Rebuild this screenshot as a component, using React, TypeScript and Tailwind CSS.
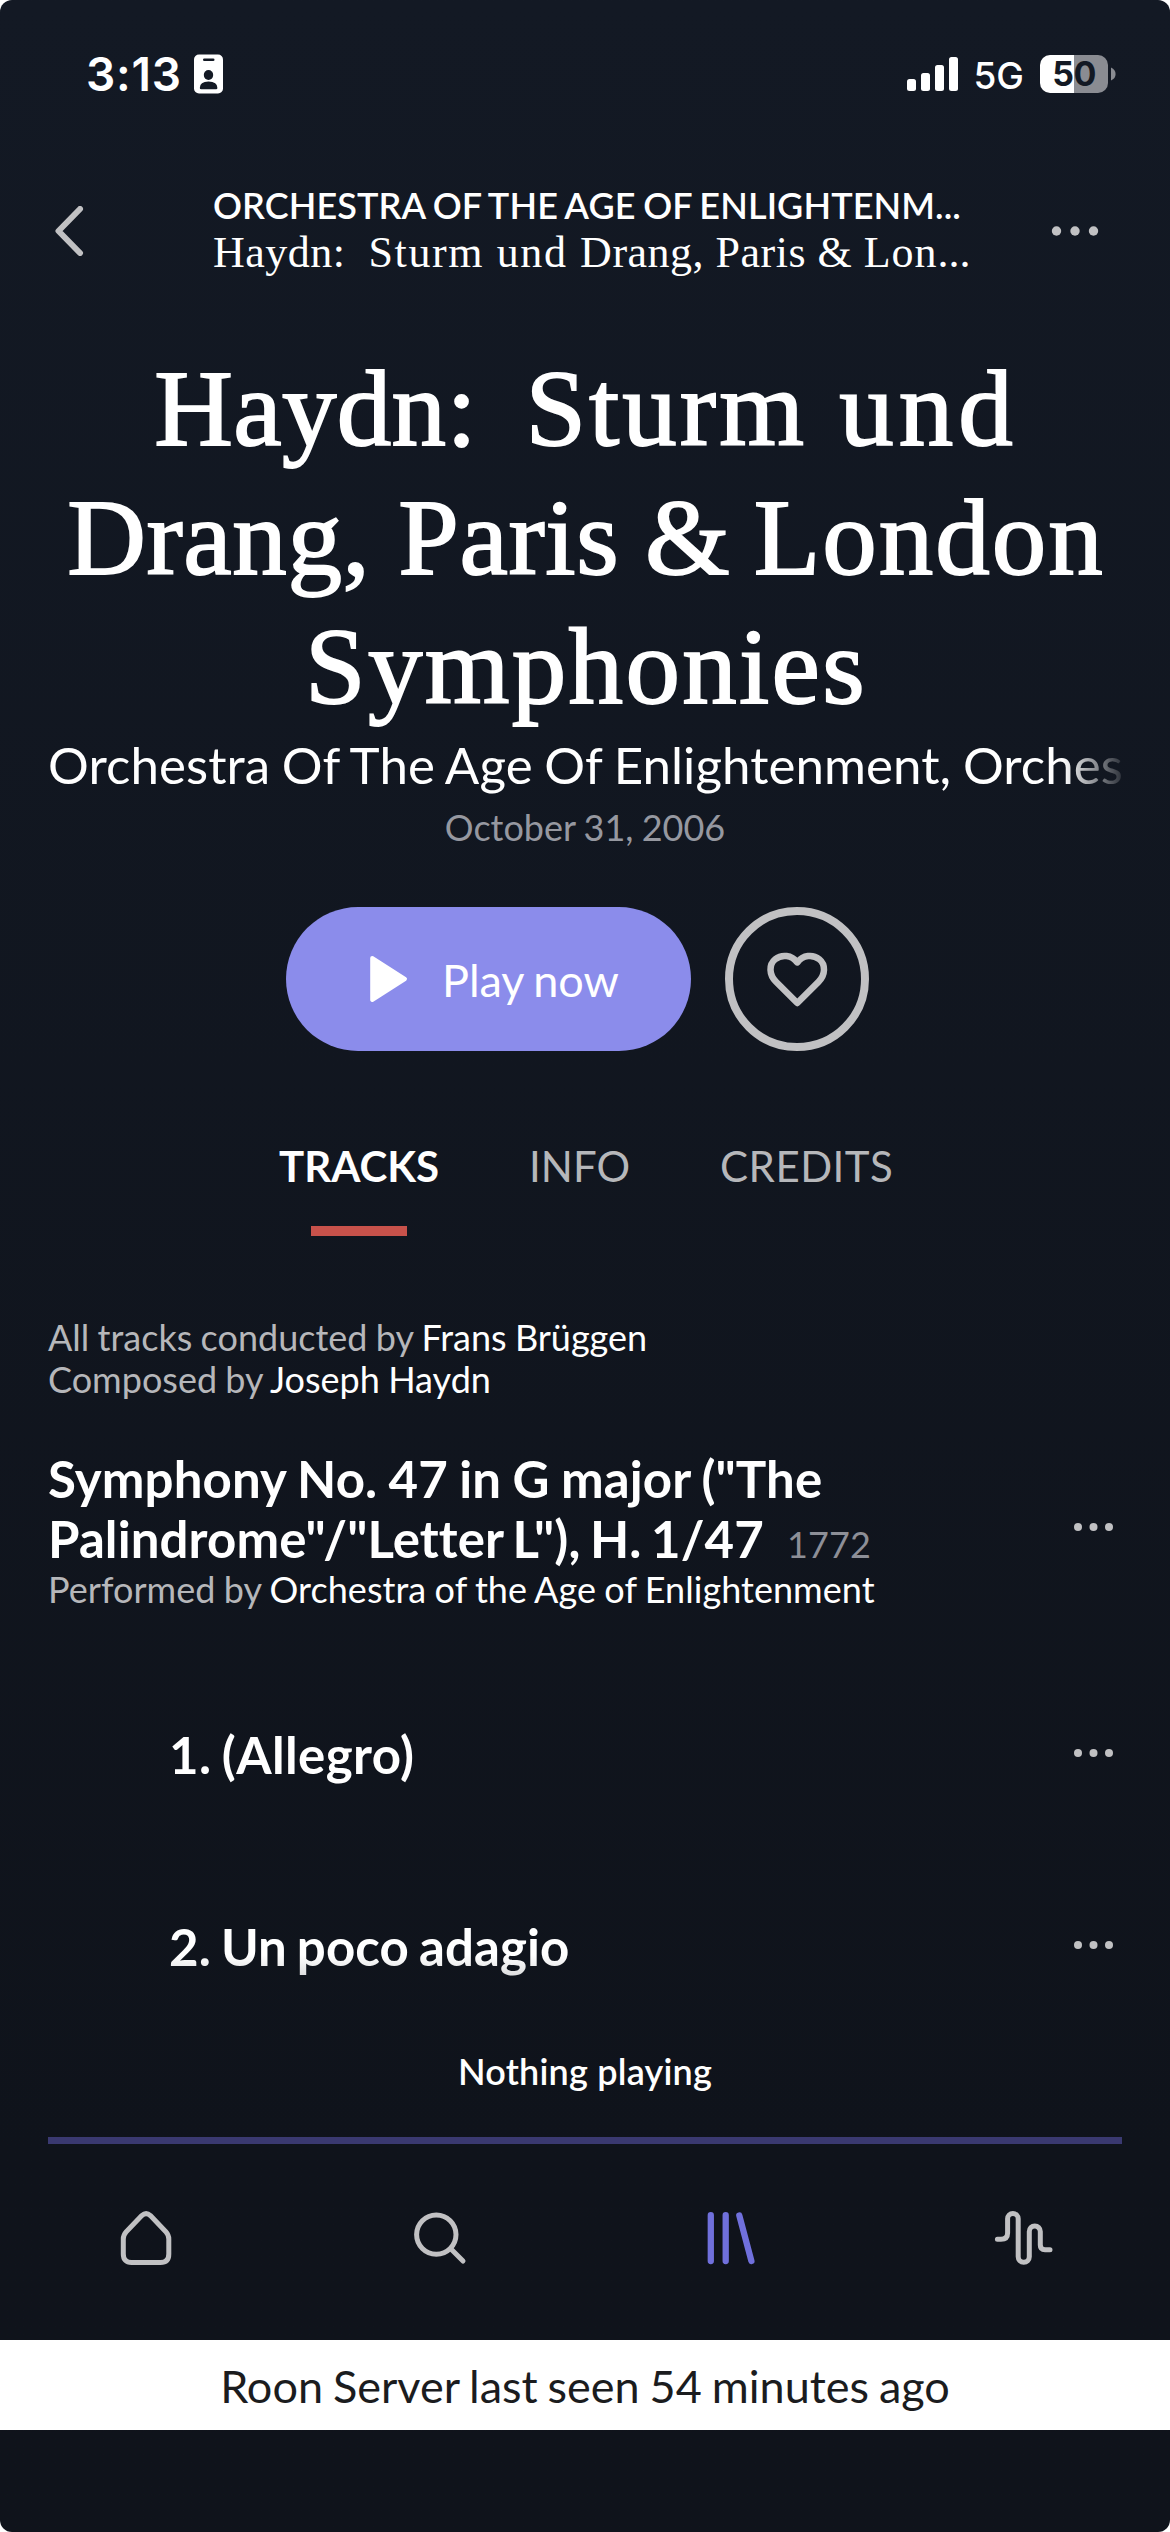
import React, { useState } from "react";

const titleLines = [
  [
    { text: "Haydn:", spacing: "tracking-[0.3px]" },
    { text: "  ", spacing: "tracking-[-3px]" },
    { text: "Sturm", spacing: "tracking-[3px]" },
    { text: " ", spacing: "tracking-[5px]" },
    { text: "und", spacing: "tracking-[5px]" },
  ],
  [
    { text: "Drang, Paris", spacing: "tracking-[0.6px]" },
    { text: " & ", spacing: "tracking-[-1.6px]" },
    { text: "London", spacing: "tracking-[2px]" },
  ],
  [{ text: "Symphonies", spacing: "tracking-[2.3px]" }],
];

const tracks = [
  { title: "1. (Allegro)", spacing: "tracking-[0.4px]" },
  { title: "2. Un poco adagio", spacing: "tracking-[0.1px]" },
];

const tabs = [
  { name: "TRACKS", spacing: "" },
  { name: "INFO", spacing: "" },
  { name: "CREDITS", spacing: "tracking-[0.5px]" },
];

const HomeIcon = () => (
  <svg width="60" height="60" viewBox="0 0 60 60" fill="none" stroke="currentColor" strokeWidth="5" strokeLinejoin="round">
    <path d="M25.8 7.6 Q30.1 3.6 34.4 7.6 L49.6 23.4 Q52.8 27 52.8 31 V46 Q52.8 54.5 44.5 54.5 H15.5 Q7.3 54.5 7.3 46 V31 Q7.3 27 10.5 23.4 Z" />
  </svg>
);

const SearchIcon = () => (
  <svg width="60" height="60" viewBox="0 0 60 60" fill="none" stroke="currentColor" strokeWidth="5" strokeLinecap="round">
    <circle cx="27.3" cy="26.6" r="19.7" />
    <path d="M42 41 L54 53" />
  </svg>
);

const LibraryIcon = () => (
  <svg width="60" height="60" viewBox="0 0 60 60" fill="none" stroke="currentColor" strokeWidth="6.3" strokeLinecap="round">
    <path d="M9.8 7.2 V53 M24.7 7.2 V53 M38.3 7.5 L50.4 53" />
  </svg>
);

const WaveIcon = () => (
  <svg width="60" height="60" viewBox="0 0 60 60" fill="none" stroke="currentColor" strokeWidth="5" strokeLinecap="round">
    <path d="M3.4 31.3 H7 Q13.6 31.3 13.6 25 V10.8 A5.3 5.3 0 0 1 24.2 10.8 V48.8 A5.5 5.5 0 0 0 35.3 48.8 V23.5 A5.5 5.5 0 0 1 46.3 23.5 V37 Q46.3 41.7 51 41.7 H56" />
  </svg>
);

const navItems = [
  { name: "Home", icon: HomeIcon },
  { name: "Search", icon: SearchIcon },
  { name: "Library", icon: LibraryIcon },
  { name: "Audio", icon: WaveIcon },
];

const StatusBar = () => (
  <div className="flex h-[148px] shrink-0 items-center pl-[86px] pr-[54px] font-['Inter',sans-serif]">
    <span className="text-[46px] font-semibold leading-[56px] tracking-[0.8px]">3:13</span>
    <svg className="ml-[12px]" width="29" height="40" viewBox="0 0 29 40">
      <rect x="0" y="0.5" width="29" height="39" rx="5" fill="#fff" />
      <rect x="9" y="4.5" width="11.5" height="2.6" rx="1.3" fill="#131924" />
      <ellipse cx="14.5" cy="21" rx="4.7" ry="5" fill="#131924" />
      <path d="M5.8 34 Q5.8 27.5 14.5 27.5 Q23.4 27.5 23.4 34 Q23.4 35.3 22 35.3 H7.2 Q5.8 35.3 5.8 34 Z" fill="#131924" />
    </svg>

    <svg className="ml-auto" width="51" height="34" viewBox="0 0 51 34" fill="#fff">
      <rect x="0" y="22" width="9" height="12" rx="2.5" />
      <rect x="14" y="16" width="9" height="18" rx="2.5" />
      <rect x="28" y="8" width="9" height="26" rx="2.5" />
      <rect x="42" y="0" width="9" height="34" rx="2.5" />
    </svg>
    <span className="ml-[15px] pt-1 text-[37px] font-medium leading-[44px]">5G</span>
    <div className="ml-[16px] flex h-[38px] w-[68px] items-center justify-center rounded-[10px] bg-linear-to-r from-white from-50% to-[#8a8c92] to-50%">
      <span className="text-[34px] font-bold leading-[38px] tracking-[-0.5px] text-[#131924]">50</span>
    </div>
    <svg className="ml-[3px]" width="5" height="14" viewBox="0 0 5 14">
      <path d="M0 0.5 Q4.6 2.5 4.6 7 Q4.6 11.5 0 13.5 Z" fill="#8a8c92" />
    </svg>
  </div>
);

const MoreDots = () => (
  <svg width="41" height="10" viewBox="0 0 41 10" fill="#c1c1c3">
    <circle cx="5" cy="5" r="4" />
    <circle cx="20.5" cy="5" r="4" />
    <circle cx="36" cy="5" r="4" />
  </svg>
);

const App = () => {
  const [activeTab, setActiveTab] = useState("TRACKS");
  const [activeNav, setActiveNav] = useState("Library");

  return (
    <div className="w-[1170px] bg-white">
      <main className="flex h-[2532px] flex-col overflow-hidden rounded-[12px] bg-[#0f131b] bg-linear-to-b from-[#131924] to-[#0f131b] to-85% font-['Lato',sans-serif] text-white">
        <StatusBar />

        <header className="flex h-[166px] shrink-0 items-center pl-[54px] pr-[71px]">
          <button>
            <svg width="30" height="50" viewBox="0 0 30 50" fill="none" stroke="#c1c1c3" strokeWidth="6" strokeLinecap="round" strokeLinejoin="round">
              <path d="M26 3 L4.5 25 L26 47" />
            </svg>
          </button>
          <div className="ml-[129px] whitespace-pre pb-1 leading-[48px]">
            <p className="text-[36px] font-semibold tracking-[0.1px] [word-spacing:-1.5px]">ORCHESTRA OF THE AGE OF ENLIGHTENM...</p>
            <p className="font-['Liberation_Serif',serif] text-[44px] tracking-[0.5px]">
              {"Haydn:  "}
              <span className="tracking-[1.6px]">{"Sturm und "}</span>
              {"Drang, Paris & "}
              <span className="tracking-[0.9px]">Lon</span>
              <span className="tracking-[0px]">...</span>
            </p>
          </div>
          <button className="ml-auto">
            <svg width="48" height="12" viewBox="0 0 48 12" fill="#c1c1c3">
              <circle cx="5.5" cy="6" r="4.7" />
              <circle cx="24" cy="6" r="4.7" />
              <circle cx="42.5" cy="6" r="4.7" />
            </svg>
          </button>
        </header>

        <section className="flex shrink-0 flex-col pt-[30px]">
          <h1 className="whitespace-pre pl-[2px] text-center font-['Liberation_Serif',serif] text-[109px] leading-[129px] [-webkit-text-stroke:1.8px_white]">
            {titleLines.map((line, i) => (
              <span key={i} className="block">
                {line.map((part) => (
                  <span key={part.text} className={part.spacing}>{part.text}</span>
                ))}
              </span>
            ))}
          </h1>
          <p className="mx-[48px] mb-px whitespace-nowrap text-[51px] leading-[67px] tracking-[0.08px] [word-spacing:-1.5px] [mask-image:linear-gradient(to_right,black_1015px,transparent_1082px)]">
            Orchestra Of The Age Of Enlightenment, Orches
          </p>
          <p className="text-center text-[36px] leading-[56px] text-[#9698a0] [word-spacing:-1px]">October 31, 2006</p>
        </section>

        <div className="mt-[52px] flex h-[144px] shrink-0 gap-[34px] pl-[286px]">
          <button className="flex w-[405px] items-center rounded-full bg-[#8b8ceb] pl-[84px]">
            <svg width="38" height="48" viewBox="0 0 38 48" fill="white" stroke="white" strokeWidth="4" strokeLinejoin="round">
              <path d="M2.2 3 L35 24 L2.2 45 Z" />
            </svg>
            <span className="ml-[34px] pt-0.5 text-[45px] leading-[52px] [word-spacing:-1.7px]">Play now</span>
          </button>
          <button className="flex w-[144px] items-center justify-center rounded-full border-[8px] border-[#c1c1c3]">
            <svg width="64" height="64" viewBox="0 0 64 64" fill="none" stroke="#c1c1c3" strokeWidth="6.5" strokeLinejoin="round">
              <path d="M32.3 56 L11 34.8 C4 28 3.6 17.5 10.2 12.2 C16.8 7 26.5 8 32.3 15.4 C38 8 47.7 7 54.3 12.2 C60.9 17.5 60.5 28 53.5 34.8 Z" />
            </svg>
          </button>
        </div>

        <nav className="mt-[90px] flex shrink-0 gap-[90px] pl-[279px] text-[42px] leading-[50px]">
          {tabs.map((tab) => (
            <button key={tab.name} onClick={() => setActiveTab(tab.name)} className="flex flex-col items-center gap-[35px]">
              <span className={`${tab.spacing} ${activeTab === tab.name ? "font-bold text-white" : "text-[#b6b7ba]"}`}>{tab.name}</span>
              <span className={`h-[10px] w-[96px] ${activeTab === tab.name ? "bg-[#c8524b]" : "hidden"}`} />
            </button>
          ))}
        </nav>

        <section className="mt-[80px] shrink-0 pl-[48px] text-[36px] leading-[42px] [word-spacing:-0.9px]">
          <p><span className="text-[#b6b7ba]">All tracks conducted by</span> Frans Brüggen</p>
          <p><span className="text-[#b6b7ba]">Composed by</span> Joseph Haydn</p>
        </section>

        <section className="mt-[49px] flex shrink-0 items-center justify-between pl-[48px] pr-[56px]">
          <div>
            <h2 className="h-[120px] text-[51px] font-bold leading-[60px] tracking-[0.1px] [word-spacing:-1.2px]">
              Symphony No. 47 in G major ("The
              <br />
              <span className="[word-spacing:-3px]">Palindrome"/"Letter L"), H. 1/47</span>
              <span className="ml-[15px] text-[36px] font-normal leading-none text-[#8d8f97]"> 1772</span>
            </h2>
            <p className="text-[36px] leading-[40px] tracking-[0.05px] [word-spacing:-1px]">
              <span className="text-[#b6b7ba]">Performed by</span> Orchestra of the Age of Enlightenment
            </p>
          </div>
          <button className="pb-1"><MoreDots /></button>
        </section>

        <ul className="relative mt-[50px] shrink-0">
          {tracks.map((track) => (
            <li key={track.title} className="flex h-[192px] items-center justify-between pl-[169px] pr-[56px]">
              <span className={`text-[51px] font-bold leading-[60px] [word-spacing:-2.5px] ${track.spacing}`}>{track.title}</span>
              <button className="pb-1"><MoreDots /></button>
            </li>
          ))}
          <div className="pointer-events-none absolute inset-x-0 bottom-0 h-[88px] bg-linear-to-b from-[#0f131b]/0 to-[#0f131b]/60" />
        </ul>

        <p className="mt-[6px] shrink-0 text-center text-[36px] font-semibold leading-[44px] tracking-[0.2px]">Nothing playing</p>
        <div className="mx-[48px] mt-[44px] h-[7px] shrink-0 bg-[#3a3970]" />

        <nav className="grid h-[196px] shrink-0 grid-cols-4 items-center justify-items-center pb-2">
          {navItems.map((item) => {
            const Icon = item.icon;

            return (
              <button key={item.name} aria-label={item.name} onClick={() => setActiveNav(item.name)} className={activeNav === item.name ? "text-[#7070dc]" : "text-[#c1c1c3]"}>
                <Icon />
              </button>
            );
          })}
        </nav>

        <p className="flex h-[90px] shrink-0 items-center justify-center bg-white pt-0.5 text-[45px] leading-[52px] text-[#1b1c1e] [word-spacing:-1.6px]">
          Roon Server last seen 54 minutes ago
        </p>
      </main>
    </div>
  );
};

export default App;
